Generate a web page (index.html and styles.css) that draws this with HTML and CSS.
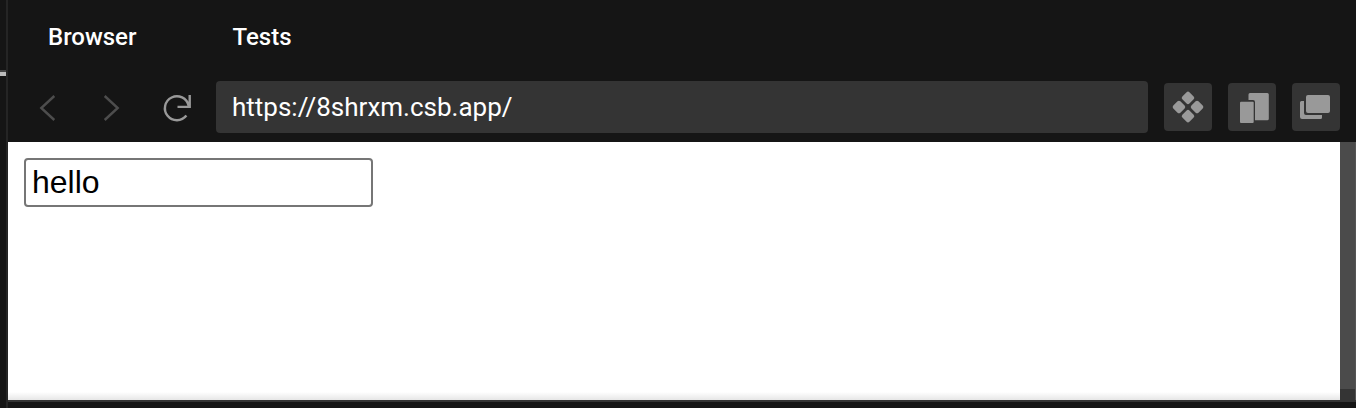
FILE: index.html
```html
<!DOCTYPE html>
<html lang="en">
<head>
	<meta charset="UTF-8">
	<meta name="viewport" content="width=device-width, initial-scale=1.0">
	<title>Browser</title>
	<link rel="stylesheet" href="styles.css">
</head>
<body>
	<div class="gutter"></div>
	<main class="panel">
		<nav class="tabs">
			<button type="button" class="tab">Browser</button>
			<button type="button" class="tab">Tests</button>
		</nav>
		<div class="toolbar">
			<div class="nav">
				<button type="button" class="nav-btn" aria-label="Back">
					<svg width="32" height="32" viewBox="0 0 32 32"><path d="M22.3 5L9.3 17L22.3 29"/></svg>
				</button>
				<button type="button" class="nav-btn" aria-label="Forward">
					<svg width="32" height="32" viewBox="0 0 32 32"><path d="M8.7 5L21.7 17L8.7 29"/></svg>
				</button>
				<button type="button" class="nav-btn reload" aria-label="Reload">
					<svg width="32" height="32" viewBox="0 0 32 32"><path d="M26.4 24.6A12 12 0 1 1 28.6 14.6M29.7 4V15.9H17.5"/></svg>
				</button>
			</div>
			<input class="address" type="text" aria-label="Address" value="https://8shrxm.csb.app/">
			<button type="button" class="tool" aria-label="Inspect">
				<svg width="48" height="48" viewBox="0 0 48 48">
					<g transform="rotate(45 24 24)">
						<rect x="12.6" y="12.6" width="10" height="10" rx="2"/>
						<rect x="25.4" y="12.6" width="10" height="10" rx="2"/>
						<rect x="12.6" y="25.4" width="10" height="10" rx="2"/>
						<rect x="25.4" y="25.4" width="10" height="10" rx="2"/>
					</g>
				</svg>
			</button>
			<button type="button" class="tool" aria-label="Responsive preview">
				<svg width="48" height="48" viewBox="0 0 48 48">
					<path d="M20.5 17V11.5Q20.5 10 22 10H39.3Q40.8 10 40.8 11.5V35.8Q40.8 37.3 39.3 37.3H27V19Q27 17 25 17Z"/>
					<rect x="12" y="18.7" width="13.7" height="21.3" rx="1"/>
				</svg>
			</button>
			<button type="button" class="tool" aria-label="Open in new window">
				<svg width="48" height="48" viewBox="0 0 48 48">
					<path d="M12 18V30Q12 32 14 32H30V34.5Q30 36 28.5 36H10Q8 36 8 34V19.5Q8 18 9.5 18Z"/>
					<rect x="14" y="12" width="24" height="18" rx="2"/>
				</svg>
			</button>
		</div>
		<section class="preview">
			<div class="page">
				<input class="field" type="text" aria-label="Text" value="hello">
			</div>
			<div class="scrollbar"><div class="thumb"></div></div>
		</section>
		<footer class="console"></footer>
	</main>
</body>
</html>
```

FILE: styles.css
```css
* {
	box-sizing: border-box;
}
body {
	margin: 0;
	height: 100vh;
	display: flex;
	background: #151515;
	font-family: Roboto, sans-serif;
}
button {
	padding: 0;
	border: 0;
	background: none;
	font: inherit;
}
svg {
	display: block;
}
.gutter {
	flex: none;
	width: 6px;
	padding-top: 70px;
}
.gutter::before {
	content: '';
	display: block;
	height: 4px;
	border-top: 2px solid #444;
	background: #bbb;
}
.panel {
	flex: 1;
	min-width: 0;
	display: flex;
	flex-direction: column;
	border-left: 2px solid #252525;
}
.tabs {
	display: flex;
	gap: 96px;
	padding: 0 40px;
}
.tab {
	height: 73px;
	color: #fff;
	font-size: 24px;
	font-weight: 500;
}
.toolbar {
	display: flex;
	align-items: center;
	gap: 16px;
	padding: 8px 16px 9px 8px;
}
.nav {
	display: flex;
	margin-right: -8px;
}
.nav-btn {
	width: 64px;
	height: 48px;
	display: flex;
	align-items: center;
	justify-content: center;
}
.nav-btn path {
	fill: none;
	stroke: #4d4d4d;
	stroke-width: 2.4;
}
.reload path {
	stroke: #999;
}
.address {
	flex: 1;
	min-width: 0;
	height: 52px;
	padding: 0 16px;
	border: 0;
	border-radius: 4px;
	background: #343434;
	color: #fff;
	font-family: inherit;
	font-size: 26px;
}
.tool {
	width: 48px;
	height: 48px;
	border-radius: 4px;
	background: #343434;
	fill: #999;
}
.preview {
	flex: 1;
	display: flex;
	background: #fff;
}
.page {
	flex: 1;
	padding: 16px;
	background: linear-gradient(to top, #e6e6e6, #fff 8px);
}
.field {
	display: block;
	width: 349px;
	height: 49px;
	padding: 0 6px;
	border: 2px solid #767676;
	border-radius: 4px;
	font-family: "Liberation Sans", Arial, sans-serif;
	font-size: 32px;
}
.scrollbar {
	width: 16px;
	background: #343434;
	border-right: 1px solid #555;
}
.thumb {
	height: calc(100% - 11px);
	background: #4b4b4b;
}
.console {
	height: 8px;
	border-top: 2px solid #343434;
}
```
